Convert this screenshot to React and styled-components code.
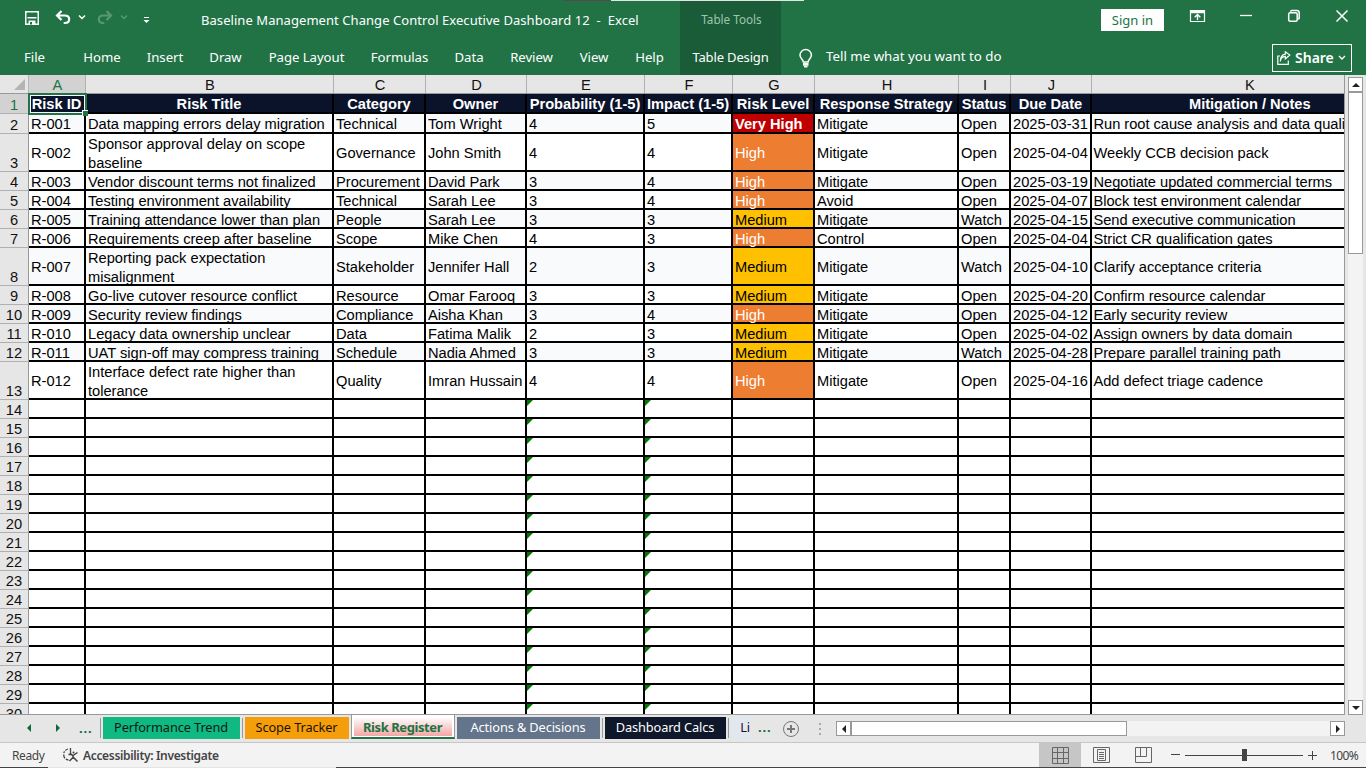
import styled, { createGlobalStyle } from "styled-components";

const columns = [
  { id: "A", width: 57, title: "Risk ID" },
  { id: "B", width: 248, title: "Risk Title" },
  { id: "C", width: 92, title: "Category" },
  { id: "D", width: 101, title: "Owner" },
  { id: "E", width: 118, title: "Probability (1-5)" },
  { id: "F", width: 88, title: "Impact (1-5)" },
  { id: "G", width: 82, title: "Risk Level" },
  { id: "H", width: 144, title: "Response Strategy" },
  { id: "I", width: 52, title: "Status" },
  { id: "J", width: 81, title: "Due Date" },
  { id: "K", width: 316, title: "Mitigation / Notes" },
];

const risks = [
  ["R-001", "Data mapping errors delay migration", "Technical", "Tom Wright", "4", "5", "Very High", "Mitigate", "Open", "2025-03-31", "Run root cause analysis and data quality checks"],
  ["R-002", "Sponsor approval delay on scope\nbaseline", "Governance", "John Smith", "4", "4", "High", "Mitigate", "Open", "2025-04-04", "Weekly CCB decision pack"],
  ["R-003", "Vendor discount terms not finalized", "Procurement", "David Park", "3", "4", "High", "Mitigate", "Open", "2025-03-19", "Negotiate updated commercial terms"],
  ["R-004", "Testing environment availability", "Technical", "Sarah Lee", "3", "4", "High", "Avoid", "Open", "2025-04-07", "Block test environment calendar"],
  ["R-005", "Training attendance lower than plan", "People", "Sarah Lee", "3", "3", "Medium", "Mitigate", "Watch", "2025-04-15", "Send executive communication"],
  ["R-006", "Requirements creep after baseline", "Scope", "Mike Chen", "4", "3", "High", "Control", "Open", "2025-04-04", "Strict CR qualification gates"],
  ["R-007", "Reporting pack expectation\nmisalignment", "Stakeholder", "Jennifer Hall", "2", "3", "Medium", "Mitigate", "Watch", "2025-04-10", "Clarify acceptance criteria"],
  ["R-008", "Go-live cutover resource conflict", "Resource", "Omar Farooq", "3", "3", "Medium", "Mitigate", "Open", "2025-04-20", "Confirm resource calendar"],
  ["R-009", "Security review findings", "Compliance", "Aisha Khan", "3", "4", "High", "Mitigate", "Open", "2025-04-12", "Early security review"],
  ["R-010", "Legacy data ownership unclear", "Data", "Fatima Malik", "2", "3", "Medium", "Mitigate", "Open", "2025-04-02", "Assign owners by data domain"],
  ["R-011", "UAT sign-off may compress training", "Schedule", "Nadia Ahmed", "3", "3", "Medium", "Mitigate", "Watch", "2025-04-28", "Prepare parallel training path"],
  ["R-012", "Interface defect rate higher than\ntolerance", "Quality", "Imran Hussain", "4", "4", "High", "Mitigate", "Open", "2025-04-16", "Add defect triage cadence"],
];

const emptyRows = Array.from({ length: 17 }, (_, i) => i + 14);

const menu = [
  ["File", 68],
  ["Home", 67],
  ["Insert", 59],
  ["Draw", 62],
  ["Page Layout", 100],
  ["Formulas", 86],
  ["Data", 53],
  ["Review", 72],
  ["View", 53],
  ["Help", 58],
];

const levelColors = {
  "Very High": { bg: "#c00000", fg: "#ffffff" },
  High: { bg: "#ed7d31", fg: "#ffffff" },
  Medium: { bg: "#ffc000", fg: "#000000" },
};

function rowHeight(risk, index) {
  if (risk[1].includes("\n")) return 38;
  return index === 0 ? 20 : 19;
}

const Ribbon = () => (
  <RibbonBar>
    <TopEdge><EdgeDark /><EdgeLight /></TopEdge>
    <RibbonLeft>
      <TitleRow>
        <QuickAccess>
          <svg width="150" height="30" viewBox="0 0 150 30" fill="none" stroke="#fff">
            <path d="M25.750 7.750h12.500v12.500h-12.500z" strokeWidth="1.500" />
            <path d="M27.500 13.750h9" strokeWidth="1.500" />
            <path d="M28.500 16.500h7V20h-7z" fill="#fff" stroke="none" />
            <path d="M30 18h2v2.500h-2z" fill="#217346" stroke="none" />
            <path d="M61.500 7L57 11.500l4.500 4.500M57.500 11.500h7.200c6 0 6 7.500 0 7.500h-1" strokeWidth="2.200" />
            <path d="M79 11.500l3 3 3-3" strokeWidth="1.500" />
            <g opacity=".25">
              <path d="M106.500 7l4.500 4.500-4.500 4.500M110.500 11.500h-7.200c-6 0-6 7.500 0 7.500h1" strokeWidth="2.200" />
              <path d="M121 11.500l3 3 3-3" strokeWidth="1.500" />
            </g>
            <path d="M144 13.500h5" strokeWidth="1" />
            <path d="M143.500 16h6l-3 3z" fill="#fff" stroke="none" />
          </svg>
        </QuickAccess>
        <DocTitle>Baseline Management Change Control Executive Dashboard 12&nbsp; -&nbsp; Excel</DocTitle>
      </TitleRow>
      <MenuRow>
        {menu.map(([label, width]) => <MenuItem key={label} $width={width}>{label}</MenuItem>)}
      </MenuRow>
    </RibbonLeft>
    <ContextTab>
      <ContextTitle>Table Tools</ContextTitle>
      <ContextItem>Table Design</ContextItem>
    </ContextTab>
    <RibbonRight>
      <WindowRow>
        <SignIn>Sign in</SignIn>
        <WindowIcons width="180" height="30" viewBox="0 0 180 30" fill="none" stroke="#fff">
          <path d="M4.500 10.500h14v11h-14z" strokeWidth="1.200" />
          <path d="M4 12h15" strokeWidth="2.500" />
          <path d="M11.500 20v-5M8.700 17.300l2.800-2.800 2.800 2.800" strokeWidth="1.400" />
          <path d="M54 15.500h12" strokeWidth="1.300" />
          <rect x="102.700" y="12.700" width="8.500" height="8.500" rx="1.500" strokeWidth="1.500" />
          <path d="M104.700 11.800v-.3q0-1 1-1h5q2.500 0 2.500 2.500v5q0 1-1 1h-.5" strokeWidth="1.500" />
          <path d="M150.500 10.500l11 11M161.500 10.500l-11 11" strokeWidth="1.500" />
        </WindowIcons>
      </WindowRow>
      <TellRow>
        <svg width="16" height="20" viewBox="0 0 16 20" fill="none" stroke="#fff" strokeWidth="1.500">
          <path d="M5.300 14C5.300 11.300 2 10.500 2 7.300a5.700 5.700 0 0 1 11.400 0c0 3.200-3.300 4-3.300 6.700z" />
          <path d="M5 15.700h5.500M5 17h5.500" />
          <path d="M6 18.700h3.500" />
        </svg>
        <TellText>Tell me what you want to do</TellText>
        <ShareButton>
          <svg width="14" height="14" viewBox="0 0 14 14" fill="none" stroke="#fff" strokeWidth="1.200">
            <path d="M3 5H.8v8.300h10.500V9.500" />
            <path d="M3.300 10.500c.3-3.300 2-5 5-5.200V8l4.500-4L8.300.8v2.400C5 3.800 3.300 6.500 3.300 10.500z" />
          </svg>
          <span>Share</span>
          <svg width="8" height="6" viewBox="0 0 8 6" fill="none" stroke="#fff" strokeWidth="1.400"><path d="M1 1l3 3 3-3" /></svg>
        </ShareButton>
      </TellRow>
    </RibbonRight>
  </RibbonBar>
);

const Sheet = () => (
  <SheetArea>
    <GridPane>
      <ColumnHeads>
        <Corner><svg width="11" height="11" viewBox="0 0 11 11"><path d="M11 0v11H0z" fill="#b4b4b4" /></svg></Corner>
        {columns.map(col => <ColumnHead key={col.id} $width={col.width} $active={col.id === "A"}>{col.id}</ColumnHead>)}
      </ColumnHeads>
      <Row $height={20}>
        <RowHead $active>1</RowHead>
        {columns.map(col => <HeaderCell key={col.id} $width={col.width}>{col.title}</HeaderCell>)}
      </Row>
      {risks.map((risk, r) => (
        <Row key={risk[0]} $height={rowHeight(risk, r)} $tinted={r % 2 === 0}>
          <RowHead>{r + 2}</RowHead>
          {risk.map((value, c) => (
            <Cell
              key={c}
              $width={columns[c].width}
              $level={c === 6 ? levelColors[value] : undefined}
              $bold={value === "Very High"}
              $tight={rowHeight(risk, r) === 19 || value.includes("\n")}
            >{value}</Cell>
          ))}
        </Row>
      ))}
      {emptyRows.map(n => (
        <Row key={n} $height={19}>
          <RowHead>{n}</RowHead>
          {columns.map(col => (
            <Cell key={col.id} $width={col.width}>
              {col.id === "E" || col.id === "F" ? <ErrorMark /> : null}
            </Cell>
          ))}
        </Row>
      ))}
      <Selection><FillHandle /></Selection>
    </GridPane>
    <VerticalScroll>
      <ScrollButton><Arrow $dir="up" /></ScrollButton>
      <VerticalTrack><VerticalThumb /></VerticalTrack>
      <ScrollButton><Arrow $dir="down" /></ScrollButton>
    </VerticalScroll>
  </SheetArea>
);

const SheetTabs = () => (
  <TabsBar>
    <TabNav>
      <svg width="40" height="10" viewBox="0 0 40 10" fill="#0b6a3a"><path d="M6 1v8L2 5zM31 1v8l4-4z" /></svg>
      <Dots>...</Dots>
    </TabNav>
    <Divider $first />
    <Tab $width={137} $bg="#10b981" $fg="#0b1a14">Performance Trend</Tab>
    <Divider />
    <Tab $width={104} $bg="#f59e0b" $fg="#1c1200">Scope Tracker</Tab>
    <ActiveTab><span>Risk Register</span></ActiveTab>
    <Tab $width={143} $bg="#64748b" $fg="#ffffff">Actions &amp; Decisions</Tab>
    <Divider />
    <Tab $width={121} $bg="#0f172a" $fg="#ffffff">Dashboard Calcs</Tab>
    <Divider />
    <Tab $width={19} $bg="#e2e8f0" $fg="#2a1020" $cut>Li</Tab>
    <Dots>...</Dots>
    <AddSheet width="18" height="18" viewBox="0 0 18 18" fill="none" stroke="#777">
      <circle cx="9" cy="9" r="7.500" />
      <path d="M9 5v8M5 9h8" strokeWidth="2" />
    </AddSheet>
    <Grip><i /><i /><i /></Grip>
    <HorizontalScroll>
      <ScrollButton><Arrow $dir="left" /></ScrollButton>
      <HorizontalThumb />
      <HorizontalTrack />
      <ScrollButton><Arrow $dir="right" /></ScrollButton>
    </HorizontalScroll>
  </TabsBar>
);

const StatusBar = () => (
  <Status>
    <Ready>Ready</Ready>
    <svg width="17" height="16" viewBox="0 0 17 16" fill="none" stroke="#444" strokeWidth="1.300">
      <path d="M6 2C4 2.700 2.200 4 1.800 6" strokeDasharray="3 1.200" />
      <path d="M1.700 7.500c0 3 1.500 5 4.800 5.700" strokeDasharray="4 1.300" />
      <path d="M8.500 1v5" />
      <path d="M6.500 7.500h3l1.500 1 1.500-1 3-2M11 8.500v2L7.500 14M11 10l4.500 4.500M8 6l3 3" strokeWidth="1.500" />
      <circle cx="11.500" cy="5.500" r="1" fill="#444" stroke="none" />
    </svg>
    <Access>Accessibility: Investigate</Access>
    <ViewButton $active $width={42}>
      <svg width="17" height="17" viewBox="0 0 17 17" fill="none" stroke="#666"><path d="M.5.5h16v16H.5zM5.500.5v16M11.500.5v16M.5 5.500h16M.5 11.500h16" /></svg>
    </ViewButton>
    <ViewButton $width={41}>
      <svg width="17" height="16" viewBox="0 0 17 16" fill="none" stroke="#666"><path d="M.5.5h16v15H.5zM4.500 2.500h8v11h-8zM6 5.500h5M6 7.500h5M6 9.500h5M6 11.500h5" /></svg>
    </ViewButton>
    <ViewButton $width={43}>
      <svg width="17" height="16" viewBox="0 0 17 16" fill="none" stroke="#666"><path d="M.5.5h16v15H.5zM5.500.5v9M11.500.5v9H.5" /></svg>
    </ViewButton>
    <Zoom>
      <svg width="138" height="14" viewBox="0 0 138 14" fill="none" stroke="#444">
        <path d="M1 6.500h9M15 7.500h118" />
        <path d="M72 1h5v12h-5z" fill="#444" stroke="none" />
      </svg>
      <svg width="9" height="9" viewBox="0 0 9 9" stroke="#444"><path d="M0 4.500h9M4.500 0v9" /></svg>
    </Zoom>
    <Percent>100%</Percent>
  </Status>
);

export default function App() {
  return (
    <Window>
      <GlobalStyle />
      <Ribbon />
      <Sheet />
      <SheetTabs />
      <StatusBar />
      <BottomEdge><BottomLight /></BottomEdge>
    </Window>
  );
}

const GlobalStyle = createGlobalStyle`
  * { box-sizing: border-box; }
  body { margin: 0; overflow: hidden; }
  svg { display: block; flex: none; }
`;

const Window = styled.div`
  width: 1366px;
  height: 768px;
  overflow: hidden;
  display: flex;
  flex-direction: column;
  font-family: "Noto Sans", "Open Sans", sans-serif;
  font-size: 13px;
  background: #e6e6e6;
`;

const RibbonBar = styled.div`
  position: relative;
  height: 75px;
  flex: none;
  display: flex;
  background: #217346;
  color: #fff;
`;

const TopEdge = styled.div`
  position: absolute;
  top: 0;
  left: 563px;
  display: flex;
`;

const EdgeDark = styled.div`
  width: 48px;
  height: 1px;
  background: #554a4d;
`;

const EdgeLight = styled.div`
  width: 193px;
  height: 1px;
  background: #e4e4e4;
`;

const RibbonLeft = styled.div`
  width: 680px;
`;

const TitleRow = styled.div`
  height: 40px;
  display: flex;
  align-items: center;
`;

const QuickAccess = styled.div`
  width: 201px;
  padding-bottom: 2px;
`;

const DocTitle = styled.div`
  white-space: nowrap;
  font-size: 13px;
  letter-spacing: 0.06px;
`;

const MenuRow = styled.div`
  height: 35px;
  display: flex;
`;

const MenuItem = styled.div`
  width: ${props => props.$width}px;
  padding-left: 1px;
  line-height: 35px;
  text-align: center;
  white-space: nowrap;
  font-size: 13.2px;
  letter-spacing: -0.05px;
`;

const ContextTab = styled.div`
  width: 101px;
  background: #1a5c38;
  text-align: center;
`;

const ContextTitle = styled.div`
  height: 40px;
  padding-left: 2px;
  line-height: 38px;
  font-size: 11.7px;
  color: #9fc5ae;
`;

const ContextItem = styled.div`
  line-height: 35px;
  font-size: 13px;
  letter-spacing: -0.15px;
`;

const RibbonRight = styled.div`
  flex: 1;
`;

const WindowRow = styled.div`
  height: 40px;
  display: flex;
  padding-left: 320px;
`;

const SignIn = styled.div`
  width: 63px;
  height: 22px;
  margin-top: 9px;
  line-height: 22px;
  background: #fff;
  color: #217346;
  text-align: center;
  font-size: 13px;
`;

const WindowIcons = styled.svg`
  margin-left: 22px;
`;

const TellRow = styled.div`
  height: 35px;
  display: flex;
  align-items: center;
  padding-left: 17px;
`;

const TellText = styled.div`
  width: 458px;
  padding-left: 12px;
  padding-bottom: 4px;
  font-size: 13.3px;
`;

const ShareButton = styled.div`
  width: 80px;
  height: 28px;
  border: 1px solid #fff;
  display: flex;
  align-items: center;
  padding: 0 3px 0 4px;
  gap: 4px;
  font-size: 14px;
  font-weight: 600;
`;

const SheetArea = styled.div`
  height: 640px;
  flex: none;
  display: flex;
`;

const GridPane = styled.div`
  position: relative;
  width: 1345px;
  overflow: hidden;
  border-right: 1px solid #999;
  border-bottom: 1px solid #999;
  font-family: "Liberation Sans", Arial, sans-serif;
  font-size: 14.67px;
  color: #000;
`;

const ColumnHeads = styled.div`
  display: flex;
  width: 1500px;
  height: 19px;
  background: #e6e6e6;
  border-bottom: 1px solid #999;
`;

const Corner = styled.div`
  width: 29px;
  flex: none;
  padding: 4px 0 0 14px;
  border-right: 1px solid #b4b4b4;
`;

const ColumnHead = styled.div`
  width: ${props => props.$width}px;
  flex: none;
  padding-left: 1px;
  line-height: 20px;
  text-align: center;
  border-right: 1px solid #b0b0b0;
  background: ${props => props.$active ? "#d2d2d2" : "#e6e6e6"};
  color: ${props => props.$active ? "#217346" : "#111"};
`;

const Row = styled.div`
  display: flex;
  width: 1500px;
  height: ${props => props.$height}px;
  background: ${props => props.$tinted ? "#f8fafc" : "#fff"};
`;

const RowHead = styled.div`
  width: 29px;
  flex: none;
  display: flex;
  justify-content: center;
  align-items: flex-end;
  line-height: 16px;
  border-right: 1px solid #999;
  border-bottom: 1px solid #b0b0b0;
  background: ${props => props.$active ? "#d2d2d2" : "#e6e6e6"};
  color: ${props => props.$active ? "#217346" : "#111"};
`;

const Cell = styled.div`
  position: relative;
  width: ${props => props.$width}px;
  flex: none;
  display: flex;
  align-items: center;
  padding: ${props => props.$tight ? 4 : 2}px 0 0 2px;
  line-height: 19px;
  letter-spacing: -0.01px;
  white-space: pre;
  border-right: 2px solid #000;
  border-bottom: 2px solid #000;
  background: ${props => props.$level ? props.$level.bg : "transparent"};
  color: ${props => props.$level ? props.$level.fg : "#000"};
  font-weight: ${props => props.$bold ? 700 : 400};

  &:last-child {
    padding-left: 1.5px;
    letter-spacing: -0.03px;
  }
`;

const HeaderCell = styled(Cell)`
  justify-content: center;
  padding: 2px 0 0;
  background: #0b132b;
  color: #fff;
  font-weight: 700;
`;

const ErrorMark = styled.div`
  position: absolute;
  top: 0;
  left: 0;
  border-top: 6px solid #007a00;
  border-right: 6px solid transparent;
`;

const Selection = styled.div`
  position: absolute;
  top: 18px;
  left: 28px;
  width: 59px;
  height: 22px;
  border: 2px solid #217346;
  box-shadow: inset 0 0 0 1px #fff;
`;

const FillHandle = styled.div`
  position: absolute;
  right: -3px;
  bottom: -3px;
  width: 6px;
  height: 6px;
  background: #217346;
  border-top: 1px solid #fff;
  border-left: 1px solid #fff;
`;

const VerticalScroll = styled.div`
  width: 18px;
  padding: 2px 0 0 3px;
  display: flex;
  flex-direction: column;
`;

const ScrollButton = styled.div`
  width: 15px;
  height: 15px;
  flex: none;
  display: flex;
  align-items: center;
  justify-content: center;
  border: 1px solid #999;
  background: #fff;
`;

const angles = { up: 0, right: 90, down: 180, left: 270 };

const Arrow = styled.div`
  border-left: 4px solid transparent;
  border-right: 4px solid transparent;
  border-bottom: 4px solid #222;
  transform: rotate(${props => angles[props.$dir]}deg);
`;

const VerticalTrack = styled.div`
  width: 15px;
  height: 608px;
  background: #f3f3f3;
`;

const VerticalThumb = styled.div`
  height: 162px;
  background: #fff;
  border: 1px solid #999;
`;

const TabsBar = styled.div`
  height: 28px;
  flex: none;
  display: flex;
  align-items: flex-start;
  border-bottom: 1px solid #c6c6c6;
`;

const TabNav = styled.div`
  width: 100px;
  height: 26px;
  padding-left: 25px;
  display: flex;
  align-items: center;
  gap: 6px;
`;

const Dots = styled.div`
  width: 28px;
  padding-left: 8px;
  color: #0b6a3a;
  font-weight: 700;
  letter-spacing: 0.8px;
  line-height: 25px;
`;

const Divider = styled.div`
  width: 1px;
  height: 20px;
  margin: 3px 2px 0 ${props => props.$first ? 0 : 2}px;
  background: #999;
`;

const Tab = styled.div`
  width: ${props => props.$width}px;
  height: 22px;
  margin-top: 2px;
  padding-right: ${props => props.$cut ? 0 : 1}px;
  flex: none;
  overflow: hidden;
  line-height: 21px;
  text-align: ${props => props.$cut ? "right" : "center"};
  white-space: nowrap;
  font-size: 12.8px;
  letter-spacing: -0.12px;
  background: ${props => props.$bg};
  color: ${props => props.$fg};
`;

const ActiveTab = styled.div`
  width: 104px;
  height: 24px;
  margin: 0 2px;
  flex: none;
  padding: 2px 2px 1px;
  background: #fff;
  border-left: 1px solid #999;
  border-right: 1px solid #999;
  border-bottom: 2px solid #217346;

  & > span {
    display: block;
    height: 19px;
    padding-right: 1px;
    line-height: 21px;
    text-align: center;
    font-size: 13px;
    font-weight: 700;
    letter-spacing: -0.42px;
    color: #217346;
    background: linear-gradient(#fff, #f4a6a6);
  }
`;

const AddSheet = styled.svg`
  margin: 5px 0 0 4px;
`;

const Grip = styled.div`
  width: 36px;
  padding: 8px 0 0 19px;
  display: flex;
  flex-direction: column;
  gap: 3px;

  & > i {
    width: 2px;
    height: 2px;
    background: #aaa;
  }
`;

const HorizontalScroll = styled.div`
  flex: 1;
  display: flex;
  margin: 6px 21px 0 0;
`;

const HorizontalThumb = styled.div`
  width: 276px;
  height: 15px;
  background: #fff;
  border: 1px solid #999;
`;

const HorizontalTrack = styled.div`
  flex: 1;
  height: 15px;
  background: #f3f3f3;
`;

const Status = styled.div`
  height: 24px;
  flex: none;
  display: flex;
  align-items: center;
  background: #f3f3f3;
  color: #444;
  font-size: 12px;
`;

const Ready = styled.div`
  width: 62px;
  padding-left: 12px;
  letter-spacing: -0.4px;
`;

const Access = styled.div`
  width: 960px;
  padding-left: 4px;
  font-weight: 600;
  letter-spacing: -0.33px;
`;

const ViewButton = styled.div`
  width: ${props => props.$width}px;
  height: 24px;
  flex: none;
  display: flex;
  align-items: center;
  justify-content: center;
  background: ${props => props.$active ? "#c6c6c6" : "transparent"};
`;

const Zoom = styled.div`
  width: 165px;
  padding-left: 5px;
  flex: none;
  display: flex;
  align-items: center;
`;

const Percent = styled.div`
  white-space: nowrap;
  letter-spacing: -0.6px;
`;

const BottomEdge = styled.div`
  height: 2px;
  flex: none;
  padding-left: 48px;
  background: #444;
`;

const BottomLight = styled.div`
  width: 288px;
  height: 2px;
  background: #e4e4e4;
`;
